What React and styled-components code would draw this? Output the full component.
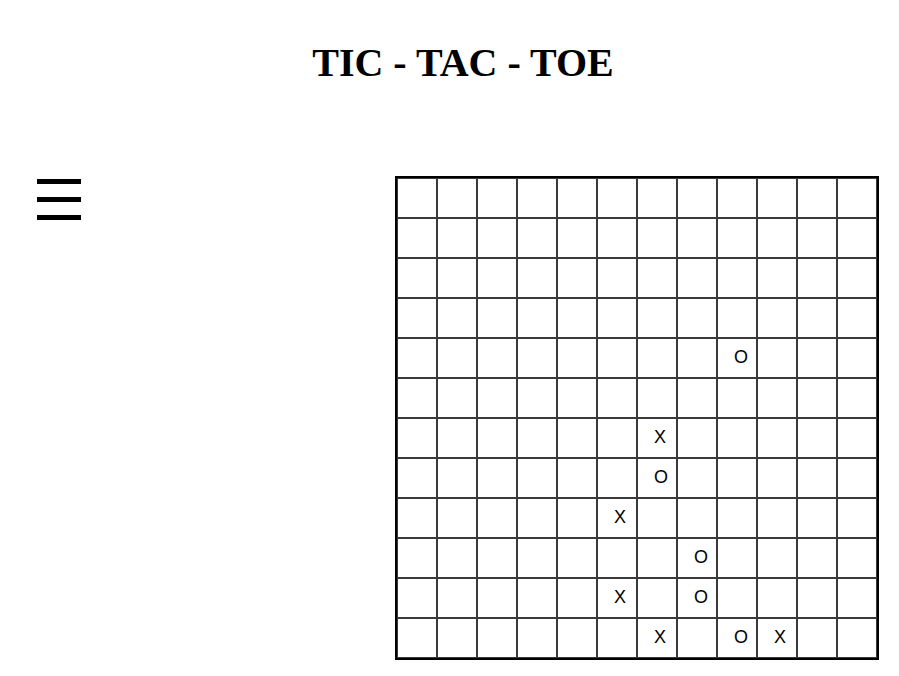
import React from "react";
import styled, { createGlobalStyle } from "styled-components";

const GlobalStyle = createGlobalStyle`
  html, body { margin: 0; padding: 0; background: #fff; }
  body { font-family: "Liberation Serif", "Times New Roman", serif; color: #000; }
`;

const Page = styled.div`
  width: 899px;
  min-height: 676px;
  box-sizing: border-box;
`;

const Title = styled.h1`
  margin: 0;
  padding: 40px 0 0 27px;
  font-family: "Liberation Serif", "Times New Roman", serif;
  font-weight: bold;
  font-size: 40px;
  line-height: 46px;
  text-align: center;
`;

const Main = styled.div`
  display: flex;
  align-items: flex-start;
  margin-top: 90px;
  padding-left: 37px;
`;

const MenuButton = styled.button`
  display: flex;
  flex-direction: column;
  gap: 13px;
  margin-top: 3px;
  padding: 0;
  border: none;
  background: none;
  cursor: pointer;
`;

const Bar = styled.span`
  display: block;
  width: 44px;
  height: 5px;
  background: #000;
`;

const Board = styled.div`
  margin-left: 314px;
  display: grid;
  grid-template-columns: repeat(12, 40px);
  grid-auto-rows: 40px;
  border: 2px solid #000;
`;

const Cell = styled.div`
  box-sizing: border-box;
  border: 1px solid #3a3a3a;
  padding-left: 16px;
  font-family: "Liberation Sans", Arial, sans-serif;
  font-size: 18px;
  line-height: 37px;
  text-align: left;
  color: #000;
`;

const marks = {
  "4-8": "O",
  "6-6": "X",
  "7-6": "O",
  "8-5": "X",
  "9-7": "O",
  "10-5": "X",
  "10-7": "O",
  "11-6": "X",
  "11-8": "O",
  "11-9": "X",
};

export default function App() {
  const cells = [];
  for (let r = 0; r < 12; r++) {
    for (let c = 0; c < 12; c++) {
      cells.push(<Cell key={`${r}-${c}`}>{marks[`${r}-${c}`] || ""}</Cell>);
    }
  }
  return (
    <Page>
      <GlobalStyle />
      <Title>TIC - TAC - TOE</Title>
      <Main>
        <MenuButton aria-label="menu">
          <Bar />
          <Bar />
          <Bar />
        </MenuButton>
        <Board>{cells}</Board>
      </Main>
    </Page>
  );
}
